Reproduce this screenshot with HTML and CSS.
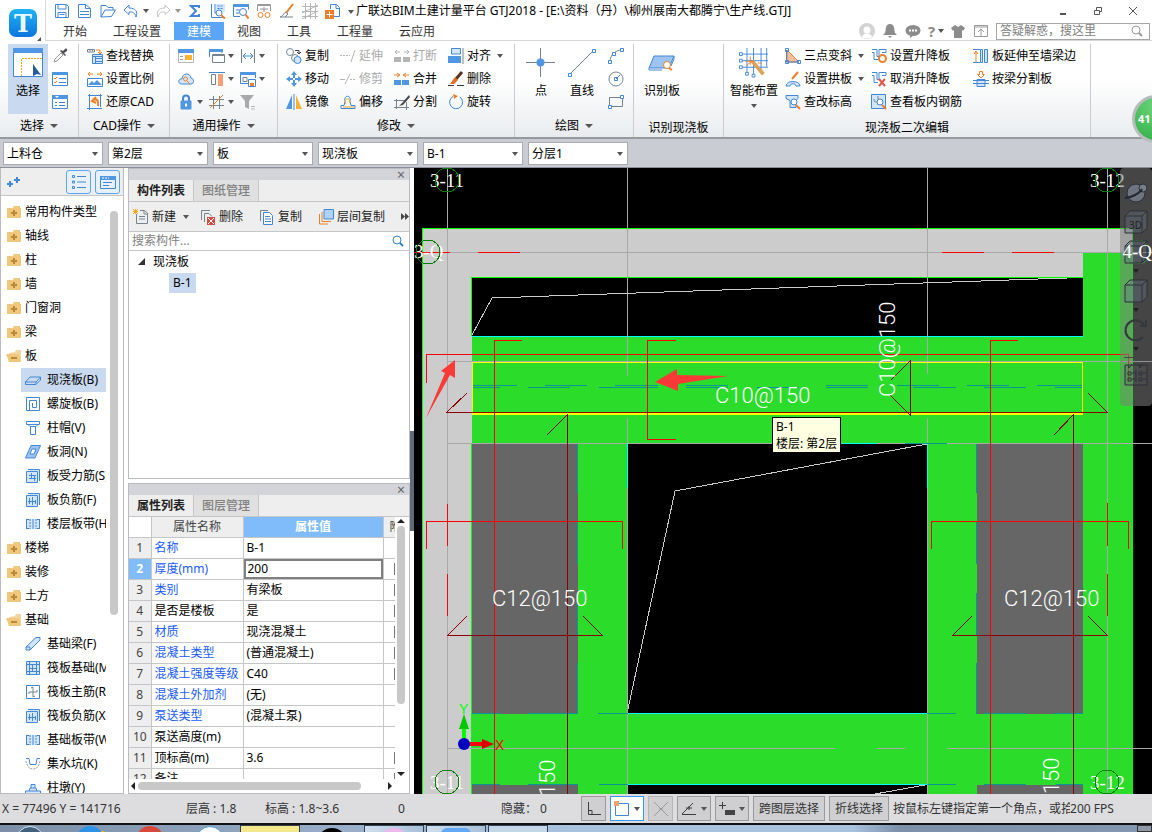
FILE: index.html
```html
<!DOCTYPE html>
<html lang="zh-CN">

<head>
    <meta charset="UTF-8">
    <meta name="viewport" content="width=device-width, initial-scale=1.0">
    <title>广联达BIM土建计量平台 GTJ2018</title>
    <link rel="stylesheet" href="styles.css">
</head>

<body>
    <!-- icon set -->
    <svg class="sprite" aria-hidden="true">
        <symbol id="save" viewBox="0 0 16 16"><path d="M1.500 1.500h11l2 2v11h-13zM4 1.500v4.500h8v-4.500M4 14.500v-5h8v5M5.500 11.500h5" class="b" /></symbol>
        <symbol id="doc" viewBox="0 0 16 16"><path d="M1.500 14.500v-13h7l5 4v9zM8.500 1.500v4h5M3 8.500h9M3 11.500h9" class="b" /></symbol>
        <symbol id="open" viewBox="0 0 16 16"><path d="M1 14V2.500h5l2 2h5V7M1 14l4-7h10.500l-4 6.500z" class="b" /></symbol>
        <symbol id="undo" viewBox="0 0 16 16"><path d="M6 2 1 7l5 4.500V9c4-.5 6 1 7 5 2-5 0-9-7-9z" class="b" /></symbol>
        <symbol id="redo" viewBox="0 0 16 16"><path d="m10 2 5 5-5 4.500V9c-4-.5-6 1-7 5C1 9 3 5 10 5z" class="g" /></symbol>
        <symbol id="sum" viewBox="0 0 16 16"><path d="M12 5V3H4l5 5-5 5h8v-2" class="b w2" /></symbol>
        <symbol id="calc" viewBox="0 0 16 16"><path d="M1.500 1v13.500H15M5 1v9h4" class="b" /><path d="M6 1h9v8H6z" class="lb" /><path d="M7.500 3h6M7.500 5.500h6" class="b dash" /><circle cx="9" cy="10" r="3" class="b fw" /><path d="m11 12 4 3.500" class="o w2" /></symbol>
        <symbol id="find" viewBox="0 0 16 16"><path d="M.5 13.500V1.500h15v5M.5 13.500H7M3 7h5M3 10h3" class="b" /><path d="M0 1h16v3H0z" class="fb" /><circle cx="10" cy="9" r="3.500" class="b fw" /><path d="m12.500 11.500 3 4" class="o w2" /></symbol>
        <symbol id="glasses" viewBox="0 0 16 16"><path d="M1.500 8V1.500h13V8M1 2.500h14M4 6h8M8 4v5" class="g" /><circle cx="4.500" cy="12" r="2.500" class="o" /><circle cx="11.500" cy="12" r="2.500" class="o" /></symbol>
        <symbol id="brush" viewBox="0 0 16 16"><path d="m14 1-7 9" class="o w2" /><path d="M7 9c-2 0-2 4-6 5h13M7 9l2 2-3 3" class="k" /></symbol>
        <symbol id="mesh" viewBox="0 0 16 16"><path d="M3.500 0v16M8.500 0v16M13.500 0v16M0 3.500h16M0 8.500h16M0 13.500h16M0 10 16 2M0 16 16 8" class="lg" /></symbol>
        <symbol id="import" viewBox="0 0 16 16"><path d="M5.500 6V1.500h6l3 3v9H9M11 1.500v4h3.500" class="b" /><path d="M0 7h9v9H0z" class="fo" /><path d="M4.500 8.500v6M1.500 11.500h6" class="w" /></symbol>

        <symbol id="select-big" viewBox="0 0 30 30"><path d="M.5.5h29v28H.5z" class="b fw" /><path d="M0 0h30v5H0z" class="fb" /><path d="M8.500 28V10.500H30" class="y dash" /><path d="m20 16 8 11-4-1-4 2z" fill="#285a9c" /></symbol>
        <symbol id="dropper" viewBox="0 0 16 16"><path d="m2 14 1-3 6-6 2 2-6 6z" class="g" /><path d="m8 3 5 5 1-1-2-2 3-2c1-2-1-3-2-2l-2 2-2-1z" fill="#4c5054" /></symbol>
        <symbol id="checklist" viewBox="0 0 16 16"><path d="M.5 1.500h15v13H.5z" class="b fw" /><path d="M0 1h16v3H0z" class="fb" /><path d="m2 7 1 1 2-2M2 11l1 1 2-2" class="o" /><path d="M7 7.500h7M7 11.500h7" class="b" /></symbol>
        <symbol id="form" viewBox="0 0 16 16"><path d="M.5 1.500h15v13H.5z" class="b fw" /><path d="M0 1h16v4H0z" class="fb" /><path d="m3 2 2 2 2-2z" fill="#fff" /><path d="M3 8.500h2M7 8.500h6M3 11.500h2M7 11.500h6" class="b" /></symbol>
        <symbol id="replace" viewBox="0 0 16 16"><path d="M.5 1.500h7v2.500h-7zM3 1.500v2M5.500 1.500v2" class="k" /><path d="M9 2h4v4M11 4l2 2 2-2" class="o" /><path d="M5.500 6.500h10v9h-10zM5 8.500h10M8.500 8v8M8 10.500h7M8 13.500h7" class="b lbf" /></symbol>
        <symbol id="scale" viewBox="0 0 16 16"><path d="M1 3h5M3 1 1 3l2 2M15 3h-5M13 1l2 2-2 2" class="o" /><path d="M.5 7.500h15v8H.5z" class="b fw" /><path d="m1 14 4-4 2 2 3-3 5 5z" class="fb" /></symbol>
        <symbol id="restore" viewBox="0 0 16 16"><path d="M1 1.500h14M2.500 0v16M0 14.500h15M13.500 0v13" class="b" /><path d="M11 12c1-5-1-8-4-6M9 3 5 7l4 2" class="o w2" /></symbol>
        <symbol id="props" viewBox="0 0 16 16"><path d="M.5 1.500h15v13H.5z" class="lg fw" /><path d="M0 1h16v4H0z" class="fb" /><path d="M2 8.500h3M2 11.500h3" class="g" /><path d="M7 7h7v5H7z" class="fy" /></symbol>
        <symbol id="layers" viewBox="0 0 16 16"><path d="M.5 9V1.500H13V5" class="b" /><path d="M0 1h14v3H0z" class="fb" /><path d="M3.500 6.500h12v8h-12z" class="k fw" /><path d="M3 7.500h13" class="k" /></symbol>
        <symbol id="measure" viewBox="0 0 16 16"><path d="M1.500 1v14M14.500 1v14" class="k" /><path d="M3 8h10M6 5 3 8l3 3M10 5l3 3-3 3" class="b" /></symbol>
        <symbol id="cloud" viewBox="0 0 16 16"><path d="M3 13c-4-1-2-6 1-5 0-6 8-7 9-1 4 1 3 6 0 6z" class="b lbf" /><circle cx="7.500" cy="8" r="2" class="o" /><path d="m9 10 3 3" class="o" /></symbol>
        <symbol id="columns" viewBox="0 0 16 16"><path d="M0 1.500h16" class="b" /><path d="M2.500 3.500h4v10h-4z" class="k" /><path d="M9 3h5v12H9z" fill="#f7a078" /></symbol>
        <symbol id="savewin" viewBox="0 0 16 16"><path d="M15.500 7V1.500H.5v11H8" class="b" /><path d="M0 1h16v3H0z" class="fb" /><path d="M3 6.500h4v4H3z" class="k" /><path d="M8.500 8.500h7v7h-7z" class="b fw" /><path d="M10 12h4v3h-4z" class="fo" /></symbol>
        <symbol id="lock" viewBox="0 0 16 16"><path d="M5 7V4.500c0-4 6-4 6 0V7" class="b w2" /><rect x="2.500" y="6.500" width="11" height="9" rx="1" class="fb" /><path d="M8 9.500v3" class="w w2" /></symbol>
        <symbol id="axis" viewBox="0 0 16 16"><path d="M4.500 2v13M10.500 2v13M0 5.500h15M0 11.500h15" class="k" /><path d="m1 14 13-13" class="o" /></symbol>
        <symbol id="filter" viewBox="0 0 16 16"><path d="M0 1h14L9 7v8l-4-2V7z" fill="#a9a9a9" /><path d="M11 12.500h4M11 15h4" class="lg" /></symbol>

        <symbol id="copy" viewBox="0 0 16 16"><circle cx="4" cy="4" r="3.500" class="k" /><path d="M9 2.500h4V5M11 4l2 2 2-2" class="dk" /><circle cx="9" cy="10" r="3.500" class="k" /><circle cx="11.500" cy="12" r="3.500" class="b lbf" /></symbol>
        <symbol id="move" viewBox="0 0 16 16"><path d="m8 0 3 4H9v3H7V4H5zM8 16l-3-4h2V9h2v3h2zM0 8l4-3v2h3v2H4v2zM16 8l-4 3V9H9V7h3V5z" class="fb" /></symbol>
        <symbol id="mirror" viewBox="0 0 16 16"><path d="M6 1v14H0z" class="fb" /><path d="M10 1v14h6z" class="fy" /><path d="M8 0v16" class="b" /></symbol>
        <symbol id="extend" viewBox="0 0 16 16"><path d="M0 7.500h10" class="lg dash" /><path d="m11 14 4-12" class="lg" /></symbol>
        <symbol id="trim" viewBox="0 0 16 16"><path d="M0 8.500h5M5 13l5-10" class="lg" /><path d="M10 8.500h6" class="lg dash" /></symbol>
        <symbol id="offset" viewBox="0 0 16 16"><path d="M1 14.500h14v-3h-4l-1-4c2-7-7-7-5 0l-1 4H1z" class="b" /><path d="M3 13h11M6 10c-3-5 4-8 4-1" class="y" /></symbol>
        <symbol id="break" viewBox="0 0 16 16"><path d="M0 9h7v5H0zM9 9h7v5H9z" fill="#b5b5b5" /><path d="M1 4h5M3 2 1 4l2 2M15 4h-5M13 2l2 2-2 2" class="lg" /></symbol>
        <symbol id="merge" viewBox="0 0 16 16"><path d="M0 9h7v5H0zM8 9h7v5H8z" class="fb" /><path d="M0 4h5M3 2l3 2-3 2M15 4h-5M12 2 9 4l3 2" class="o" /></symbol>
        <symbol id="split" viewBox="0 0 16 16"><path d="M0 6.500h13M2.500 5v10M12.500 8v8M0 13.500h15" class="k" /><path d="m15 1-7 8-3 3 4-1 7-8z" fill="#4b4b4b" /></symbol>
        <symbol id="align" viewBox="0 0 16 16"><path d="M3.500.5h9V6h-9z" class="b lbf" /><path d="M0 8h13v7H0z" class="fb" /><path d="M15 0v16" class="k" /></symbol>
        <symbol id="erase" viewBox="0 0 16 16"><path d="m14 1-6 7" stroke="#54371f" stroke-width="3" /><path d="m7 6 3 3-4 4H2z" fill="#e36a22" /><path d="M0 14.500h6M9 14.500h7" class="dk" /></symbol>
        <symbol id="rotate" viewBox="0 0 16 16"><path d="M5 2.500a6.500 6.500 0 1 0 7 .5" class="b" /><path d="m5 0 5 2-4 3z" class="fo" /></symbol>

        <symbol id="point-big" viewBox="0 0 30 30"><path d="M14.500 0v29M0 14.500h29" class="k" /><circle cx="14.500" cy="14.500" r="4" class="fb" /></symbol>
        <symbol id="line-big" viewBox="0 0 30 30"><path d="M3 26 26 3" class="k" /><path d="M1.500 25.500h3v3h-3zM25.500 1.500h3v3h-3z" class="b fw" /></symbol>
        <symbol id="arc" viewBox="0 0 16 16"><path d="M2 14c0-7 5-12 12-12" class="k" /><path d="M.5 12.500h3v3h-3zM4.500 4.500h3v3h-3zM12.500.5h3v3h-3z" class="b fw" /></symbol>
        <symbol id="circle" viewBox="0 0 16 16"><circle cx="8" cy="8" r="7" class="k" /><path d="m8 8 4-4M6.500 6.500h3v3h-3z" class="b" /></symbol>
        <symbol id="rect" viewBox="0 0 16 16"><path d="M1.500 3.500h13v9h-13z" class="k" /><path d="M.5 11.500h3v3h-3zM12.500 1.500h3v3h-3z" class="b fw" /></symbol>
        <symbol id="slab-big" viewBox="0 0 30 30"><path d="M7 8h20l-5 12H2z" class="b" /><path d="M2 20v2h13M27 8v3l-3 7" class="b" /><circle cx="20" cy="17" r="3.500" class="o fw" /><path d="m22 20 3 2" class="o w2" /></symbol>
        <symbol id="smart-big" viewBox="0 0 32 32"><path d="M8.500 0v27M15.500 0v31M23.500 0v27M29.500 0v20M1 6.500h30M1 13.500h30M1 20.500h30" class="b" /><path d="M.5 5h3v3h-3zM.5 12h3v3h-3zM.5 19h3v3h-3zM7 26h3v3H7zM14 28h3v3h-3z" class="b fw" /><path d="m14 14 12 14" stroke="#dba35e" stroke-width="4" /><path d="M12 9v9M7 14h9M8 19l5-5M20 16h4" class="o" /></symbol>
        <symbol id="slope" viewBox="0 0 16 16"><path d="M2 2v12h12z" class="o" /><path d="M1.500 2v12H14M.5.5h3v3h-3zM.5 12.500h3v3h-3zM12.500 12.500h3v3h-3z" class="b" /></symbol>
        <symbol id="arch" viewBox="0 0 16 16"><path d="m13 1-6 7" class="o w2" /><path d="M1 15c0-6 14-6 14 0h-4c0-3-6-3-6 0z" class="b lbf" /></symbol>
        <symbol id="elev" viewBox="0 0 16 16"><path d="M1 1.500h12v3l-2 2v7H5v-7l-4-2z" class="b lbf" /><circle cx="9" cy="8" r="3" class="b fw" /><path d="m11 11 4 4" class="o w2" /></symbol>
        <symbol id="lift" viewBox="0 0 16 16"><path d="M1 1.500h5v7h3M1 4.500h2v7h4M8 8V1.500h7v3h-4" class="b" /><circle cx="11.500" cy="10.500" r="3.500" class="o w2 fw" /></symbol>
        <symbol id="unlift" viewBox="0 0 16 16"><path d="M1 1.500h5v7h3M1 4.500h2v7h4M8 8V1.500h7v3h-4" class="b" /><path d="m8 8 6 7M14 8l-6 7" stroke="#e0584c" stroke-width="2" /></symbol>
        <symbol id="rebar" viewBox="0 0 16 16"><path d="M.5.5h14v14H.5z" class="b lbf" /><path d="M7 2v9M3 5c0 5 3 2 5 3" class="k" /><circle cx="9" cy="8" r="3" class="b fw" /><path d="m11 11 4 4" class="o w2" /></symbol>
        <symbol id="stretch" viewBox="0 0 16 16"><path d="M0 1.500h7M0 14.500h7M7.500 1.500h2v13h-2zM11.500 1.500h3v13h-3z" class="b lbf" /><path d="M3 3v11M1 6l2-3 2 3" class="o" /></symbol>
        <symbol id="cut" viewBox="0 0 16 16"><path d="M6.500.5h3v3h2L8 7 4.500 3.500h2z" class="o" /><path d="M0 9.500h16M0 12.500h16M4 8.500h8v7H4z" class="b lbf" /></symbol>

        <symbol id="bell" viewBox="0 0 16 16"><path d="M8 1c5 0 4 6 5 9l2 2H1l2-2c1-3 0-9 5-9zM6 13h4l-2 2z" class="fg" /></symbol>
        <symbol id="chat" viewBox="0 0 16 16"><ellipse cx="8" cy="7.500" rx="7.500" ry="5.500" class="fg" /><path d="M5 12v3l4-3z" class="fg" /><path d="M4 7.500h8" stroke="#fff" stroke-width="2" stroke-dasharray="2 1" /></symbol>
        <symbol id="shirt" viewBox="0 0 16 16"><path d="m5 2 3 2 3-2 4 3-2 3-1-1v8H4V7L3 8 1 5z" class="fg" /></symbol>
        <symbol id="upwin" viewBox="0 0 16 16"><path d="M1.500 2.500h13v11h-13zM1.500 4h13M8 13V7M5 9l3-3 3 3" class="g" /></symbol>
        <symbol id="avatar" viewBox="0 0 16 16"><circle cx="8" cy="8" r="8" fill="#d3d3d3" /><circle cx="8" cy="7" r="3.500" fill="#fff" /><path d="M3 14c2-5 8-5 10 0-2 2-8 2-10 0z" fill="#fff" /></symbol>
        <symbol id="search" viewBox="0 0 16 16"><circle cx="7" cy="7" r="4" fill="none" stroke="currentColor" /><path d="m10 10 3 3" stroke="currentColor" stroke-width="2" /></symbol>

        <symbol id="plus2" viewBox="0 0 16 16"><path d="M1 10h6M4 7v6M8 6h6M11 3v6" class="b w2" /></symbol>
        <symbol id="list" viewBox="0 0 16 16"><path d="M1.500 1.500h2v2h-2zM1.500 7h2v2h-2zM1.500 12.500h2v2h-2zM6 2.500h9M6 8h9M6 13.500h9" class="b" /></symbol>
        <symbol id="panel" viewBox="0 0 16 16"><path d="M.5 2.500h15v12H.5zM3 8.500h9M3 11.500h6" class="b" /><path d="M0 2h16v4H0z" class="fb" /><path d="M2 4h7" class="w dash" /></symbol>
        <symbol id="folder" viewBox="0 0 16 16"><path d="M1 4h6l1-2h6v2h1v10H1z" fill="#efc87e" /><path d="M8 6v6M5 9h6" stroke="#b98a35" stroke-width="2" /></symbol>
        <symbol id="folder-open" viewBox="0 0 16 16"><path d="M3 5 9 4l1-2h5v12H3z" fill="#f2d79f" /><path d="M0 6h13l2 8H3z" fill="#efc87e" /><path d="M5 10h6" stroke="#b98a35" stroke-width="2" /></symbol>
        <symbol id="slab" viewBox="0 0 16 16"><path d="M5 5h10.500L11 10H.5zM.5 10v2.500H11L15.500 8V5M11 10v2" class="b" /></symbol>
        <symbol id="spiral" viewBox="0 0 16 16"><path d="M2 14.500h12.500v-13h-13v13h3V4.500h7v7h-4V7" class="b" /></symbol>
        <symbol id="cap" viewBox="0 0 16 16"><path d="M1.500 1.500h13v3h-13zM3 4.500l2 2h6l2-2M5.500 6.500v8h5v-8" class="b" /></symbol>
        <symbol id="hole" viewBox="0 0 16 16"><path d="M6 1.500h9.500L10 14H.5z" class="b" /><path d="M7 5h4l-2 5H5z" class="b fw" /></symbol>
        <symbol id="bars" viewBox="0 0 16 16"><path d="M1.500 3.500h11v11h-11zM3 1.500h11.500V13M4 7.500h7M4 10.500h7M6.500 5v5M9.500 8v5" class="b lbf" /></symbol>
        <symbol id="neg" viewBox="0 0 16 16"><path d="M1.500 3.500h11v11h-11zM3 1.500h11.500V13M4.500 6v6M3 9.500h8M7.500 5v8M10.500 8v4" class="b lbf" /></symbol>
        <symbol id="strip" viewBox="0 0 16 16"><path d="M1 3h14v10H1z" class="lb" /><path d="M1.500 3v10M8 3v10M14.500 3v10M1 3.500h3M12 3.500h3M1 12.500h3M12 12.500h3" class="b" /><path d="M5 3v10M11 3v10" class="b dash" /></symbol>
        <symbol id="beam" viewBox="0 0 16 16"><path d="M1 11 11 1.500h4V4L5 14H1zM1 11h4v3" class="b lbf" /></symbol>
        <symbol id="raft" viewBox="0 0 16 16"><path d="M1.500 1.500h13v13h-13zM4.500 2v12M11.500 2v12M1 4.500h13M1 11.500h13M7.500 5v6M4 8.500h7" class="b lbf" /></symbol>
        <symbol id="raftbar" viewBox="0 0 16 16"><path d="M1.500 1.500h13v13h-13z" class="b" /><path d="M8 3v10M4 8h8M6 4l2-1M10 12l-2 1M4 8v2M12 8V6" class="k" /></symbol>
        <symbol id="pit" viewBox="0 0 16 16"><path d="M1 2.500h3l1 6h6l1-6h3" class="b" /><path d="M1 5c1 5 3 8 7 8s6-3 7-8" class="g dash" /></symbol>
        <symbol id="pier" viewBox="0 0 16 16"><path d="M6 8V4.500h4V8M4 11l1-3h6l1 3M.5 11h15v3.500H.5z" class="b lbf" /></symbol>

        <symbol id="new" viewBox="0 0 16 16"><path d="M3.500 5v9.500h11V4l-3-2.500H7M11 2v3h3M6 7.500h6M6 10h6" class="k" /><path d="m0 0 5 5M5 0 0 5M2.500 0v5M0 2.500h5" class="y" /></symbol>
        <symbol id="del" viewBox="0 0 16 16"><path d="M1.500 11V1.500H10M4.500 13V4.500H9l3 3" class="k" /><path d="M7 8h8v8H7z" fill="#d84b4b" /><path d="m8 9 6 6M14 9l-6 6" class="w" /></symbol>
        <symbol id="dup" viewBox="0 0 16 16"><path d="M1.500 12V1.500H9" class="k" /><path d="M4.500 3.500h6l3 3v9h-9zM6 7.500h5M6 10h6M6 12.500h6" class="b fw" /></symbol>
        <symbol id="floors" viewBox="0 0 16 16"><path d="M1.500 5v10H10M4 3v9.500h9" class="o" /><path d="M6 .5h9.500V10H6z" class="b" /></symbol>

        <symbol id="ortho" viewBox="0 0 16 16"><path d="M2.500 1v12.500H15M2 9.500h4v4" class="dk" /></symbol>
        <symbol id="snaprect" viewBox="0 0 16 16"><path d="M1.500 2.500h13v12h-13z" class="b" /><path d="M0 0h5v5H0z" fill="#f0a26a" /></symbol>
        <symbol id="cross" viewBox="0 0 16 16"><path d="m1 1 14 14M15 1 1 15M6 8h4" class="g" /></symbol>
        <symbol id="angle" viewBox="0 0 16 16"><path d="M1 13.500h14M1 13 12 2M5 7h6M8 5v4" class="dk" /></symbol>
        <symbol id="plusbox" viewBox="0 0 16 16"><path d="M0 4.500h7M3.500 1v7" class="dk" /><path d="M6 9h10v5H6z" fill="#444" /></symbol>

        <symbol id="v-orbit" viewBox="0 0 24 24"><circle cx="12" cy="13" r="9" fill="#6d7480" stroke="#2b3038" /><circle cx="19" cy="8" r="4" fill="#777e89" stroke="#2b3038" /><path d="M1 18c6 0 15-5 17-9" fill="none" stroke="#23272d" stroke-width="2" /></symbol>
        <symbol id="v-cube" viewBox="0 0 24 24"><path d="M1 6 6 1h17v17l-5 5H1zM1 6h17v17M18 6l5-5" fill="rgba(105,120,140,.35)" stroke="#2c3036" /></symbol>
        <symbol id="v-rot" viewBox="0 0 24 24"><path d="M19 19a10 10 0 1 1 1-12M22 2v6h-6" fill="none" stroke="#33383d" stroke-width="2" /></symbol>
        <symbol id="v-opt" viewBox="0 0 24 24"><path d="M1 3h22v20H1zM12 8v12M4 3l1 3 3-4M15 3l1 3 3-4" fill="rgba(90,90,100,.3)" stroke="#2c3036" /><path d="M4 10h3v3H4zM4 16h3v3H4zM15 10h3v3h-3zM15 16h3v3h-3zM8 11h3M8 17h3M19 11h3M19 17h3" fill="none" stroke="#2c3036" /></symbol>
    </svg>

    <div class="app">
        <header class="header">
            <button class="logo" aria-label="主菜单">
                <svg width="28" height="28" viewBox="0 0 28 28">
                    <defs>
                        <linearGradient id="logoFill" x1="0" y1="0" x2="0" y2="1">
                            <stop offset="0" stop-color="#1fb4f5" />
                            <stop offset="1" stop-color="#0d74dd" />
                        </linearGradient>
                    </defs>
                    <rect width="28" height="28" rx="7" fill="url(#logoFill)" />
                    <text x="14" y="23" text-anchor="middle" class="logo-letter">T</text>
                </svg>
                <i class="corner"></i>
            </button>
            <div class="header-main">
                <div class="titlebar">
                    <div class="quick">
                        <button aria-label="保存"><svg class="icon"><use href="#save" /></svg></button>
                        <button aria-label="另存为"><svg class="icon"><use href="#doc" /></svg></button>
                        <button aria-label="打开"><svg class="icon"><use href="#open" /></svg></button>
                        <button class="with-caret" aria-label="撤销"><svg class="icon"><use href="#undo" /></svg><i class="caret"></i></button>
                        <button class="with-caret dim" aria-label="恢复"><svg class="icon"><use href="#redo" /></svg><i class="caret"></i></button>
                        <button aria-label="汇总计算"><svg class="icon"><use href="#sum" /></svg></button>
                        <button aria-label="查看计算式"><svg class="icon"><use href="#calc" /></svg></button>
                        <button aria-label="查看工程量"><svg class="icon"><use href="#find" /></svg></button>
                        <button aria-label="查看钢筋量"><svg class="icon"><use href="#glasses" /></svg></button>
                        <button aria-label="编辑钢筋"><svg class="icon"><use href="#brush" /></svg></button>
                        <button aria-label="钢筋三维"><svg class="icon"><use href="#mesh" /></svg></button>
                        <button aria-label="导入"><svg class="icon"><use href="#import" /></svg></button>
                    </div>
                    <i class="caret lined"></i>
                    <h1 class="title">广联达BIM土建计量平台 GTJ2018 - [E:\资料（丹）\柳州展南大都腾宁\生产线.GTJ]</h1>
                    <div class="window-buttons">
                        <button aria-label="最小化"><svg width="10" height="10"><path d="M2 8h6" class="wb w2" /></svg></button>
                        <button aria-label="还原"><svg width="10" height="10"><path d="M1.500 4.500h5v4h-5zM3.500 4V1.500h5v4H7" class="wb" /></svg></button>
                        <button aria-label="关闭"><svg width="10" height="10"><path d="m1 1 8 8M9 1 1 9" class="wb" /></svg></button>
                    </div>
                </div>
                <nav class="tabs">
                    <a href="#start">开始</a>
                    <a href="#settings">工程设置</a>
                    <a href="#model" class="active">建模</a>
                    <a href="#view">视图</a>
                    <a href="#tools">工具</a>
                    <a href="#quantity">工程量</a>
                    <a href="#cloudapp">云应用</a>
                    <div class="user-tools">
                        <button aria-label="用户"><svg class="icon"><use href="#avatar" /></svg></button>
                        <button aria-label="消息"><svg class="icon"><use href="#bell" /></svg></button>
                        <button aria-label="反馈"><svg class="icon"><use href="#chat" /></svg></button>
                        <button class="help" aria-label="帮助">?<i class="caret"></i></button>
                        <button aria-label="皮肤"><svg class="icon"><use href="#shirt" /></svg></button>
                        <button aria-label="收起"><svg class="icon"><use href="#upwin" /></svg></button>
                        <label class="ask"><input type="text" placeholder="答疑解惑，搜这里" aria-label="答疑解惑"><svg class="icon"><use href="#search" /></svg></label>
                    </div>
                </nav>
            </div>
        </header>

        <section class="ribbon">
            <div class="group">
                <div class="tools pick">
                    <button class="big active"><svg width="30" height="30"><use href="#select-big" /></svg>选择</button>
                    <div class="col">
                        <button aria-label="拾取"><svg class="icon"><use href="#dropper" /></svg></button>
                        <button aria-label="批量选择"><svg class="icon"><use href="#checklist" /></svg></button>
                        <button aria-label="按属性选择"><svg class="icon"><use href="#form" /></svg></button>
                    </div>
                </div>
                <div class="group-name">选择<i class="caret"></i></div>
            </div>
            <div class="group">
                <div class="tools">
                    <div class="col">
                        <button><svg class="icon"><use href="#replace" /></svg>查找替换</button>
                        <button><svg class="icon"><use href="#scale" /></svg>设置比例</button>
                        <button><svg class="icon"><use href="#restore" /></svg>还原CAD</button>
                    </div>
                </div>
                <div class="group-name">CAD操作<i class="caret"></i></div>
            </div>
            <div class="group">
                <div class="tools common">
                    <div class="col">
                        <button aria-label="属性"><svg class="icon"><use href="#props" /></svg></button>
                        <button aria-label="云"><svg class="icon"><use href="#cloud" /></svg></button>
                        <button aria-label="锁定"><svg class="icon"><use href="#lock" /></svg><i class="caret"></i></button>
                    </div>
                    <div class="col">
                        <button aria-label="图层"><svg class="icon"><use href="#layers" /></svg><i class="caret"></i></button>
                        <button aria-label="构件"><svg class="icon"><use href="#columns" /></svg><i class="caret"></i></button>
                        <button aria-label="辅轴"><svg class="icon"><use href="#axis" /></svg><i class="caret"></i></button>
                    </div>
                    <div class="col">
                        <button aria-label="测量"><svg class="icon"><use href="#measure" /></svg><i class="caret"></i></button>
                        <button aria-label="存盘"><svg class="icon"><use href="#savewin" /></svg><i class="caret"></i></button>
                        <button aria-label="过滤"><svg class="icon"><use href="#filter" /></svg></button>
                    </div>
                </div>
                <div class="group-name">通用操作<i class="caret"></i></div>
            </div>
            <div class="group">
                <div class="tools modify">
                    <div class="col">
                        <button><svg class="icon"><use href="#copy" /></svg>复制</button>
                        <button><svg class="icon"><use href="#move" /></svg>移动</button>
                        <button><svg class="icon"><use href="#mirror" /></svg>镜像</button>
                    </div>
                    <div class="col">
                        <button disabled><svg class="icon"><use href="#extend" /></svg>延伸</button>
                        <button disabled><svg class="icon"><use href="#trim" /></svg>修剪</button>
                        <button><svg class="icon"><use href="#offset" /></svg>偏移</button>
                    </div>
                    <div class="col">
                        <button disabled><svg class="icon"><use href="#break" /></svg>打断</button>
                        <button><svg class="icon"><use href="#merge" /></svg>合并</button>
                        <button><svg class="icon"><use href="#split" /></svg>分割</button>
                    </div>
                    <div class="col">
                        <button><svg class="icon"><use href="#align" /></svg>对齐<i class="caret"></i></button>
                        <button><svg class="icon"><use href="#erase" /></svg>删除</button>
                        <button><svg class="icon"><use href="#rotate" /></svg>旋转</button>
                    </div>
                </div>
                <div class="group-name">修改<i class="caret"></i></div>
            </div>
            <div class="group">
                <div class="tools draw">
                    <button class="big"><svg width="30" height="30"><use href="#point-big" /></svg>点</button>
                    <button class="big"><svg width="30" height="30"><use href="#line-big" /></svg>直线</button>
                    <div class="col">
                        <button aria-label="弧"><svg class="icon"><use href="#arc" /></svg></button>
                        <button aria-label="圆"><svg class="icon"><use href="#circle" /></svg></button>
                        <button aria-label="矩形"><svg class="icon"><use href="#rect" /></svg></button>
                    </div>
                </div>
                <div class="group-name">绘图<i class="caret"></i></div>
            </div>
            <div class="group">
                <div class="tools identify">
                    <button class="big"><svg width="30" height="30"><use href="#slab-big" /></svg>识别板</button>
                </div>
                <div class="group-name fixed">识别现浇板</div>
            </div>
            <div class="group">
                <div class="tools edit">
                    <button class="big"><svg width="30" height="30"><use href="#smart-big" /></svg>智能布置<i class="caret"></i></button>
                    <div class="col">
                        <button><svg class="icon"><use href="#slope" /></svg>三点变斜<i class="caret"></i></button>
                        <button><svg class="icon"><use href="#arch" /></svg>设置拱板<i class="caret"></i></button>
                        <button><svg class="icon"><use href="#elev" /></svg>查改标高</button>
                    </div>
                    <div class="col">
                        <button><svg class="icon"><use href="#lift" /></svg>设置升降板</button>
                        <button><svg class="icon"><use href="#unlift" /></svg>取消升降板</button>
                        <button><svg class="icon"><use href="#rebar" /></svg>查看板内钢筋</button>
                    </div>
                    <div class="col">
                        <button><svg class="icon"><use href="#stretch" /></svg>板延伸至墙梁边</button>
                        <button><svg class="icon"><use href="#cut" /></svg>按梁分割板</button>
                    </div>
                </div>
                <div class="group-name fixed">现浇板二次编辑</div>
            </div>
            <div class="score">41</div>
        </section>

        <section class="context-bar">
            <select aria-label="工程"><option>上料仓</option></select>
            <select aria-label="楼层"><option>第2层</option></select>
            <select aria-label="构件类别"><option>板</option></select>
            <select aria-label="构件类型"><option>现浇板</option></select>
            <select aria-label="构件"><option>B-1</option></select>
            <select aria-label="分层"><option>分层1</option></select>
        </section>

        <main class="workspace">
            <aside class="nav">
                <div class="nav-head">
                    <button aria-label="展开"><svg class="icon"><use href="#plus2" /></svg></button>
                    <button class="boxed" aria-label="列表"><svg class="icon"><use href="#list" /></svg></button>
                    <button class="boxed" aria-label="面板"><svg class="icon"><use href="#panel" /></svg></button>
                </div>
                <div class="nav-body">
                    <ul class="nav-list">
                        <li><svg class="icon"><use href="#folder" /></svg>常用构件类型</li>
                        <li><svg class="icon"><use href="#folder" /></svg>轴线</li>
                        <li><svg class="icon"><use href="#folder" /></svg>柱</li>
                        <li><svg class="icon"><use href="#folder" /></svg>墙</li>
                        <li><svg class="icon"><use href="#folder" /></svg>门窗洞</li>
                        <li><svg class="icon"><use href="#folder" /></svg>梁</li>
                        <li><svg class="icon"><use href="#folder-open" /></svg>板</li>
                        <li class="sub active"><svg class="icon"><use href="#slab" /></svg>现浇板(B)</li>
                        <li class="sub"><svg class="icon"><use href="#spiral" /></svg>螺旋板(B)</li>
                        <li class="sub"><svg class="icon"><use href="#cap" /></svg>柱帽(V)</li>
                        <li class="sub"><svg class="icon"><use href="#hole" /></svg>板洞(N)</li>
                        <li class="sub"><svg class="icon"><use href="#bars" /></svg>板受力筋(S)</li>
                        <li class="sub"><svg class="icon"><use href="#neg" /></svg>板负筋(F)</li>
                        <li class="sub"><svg class="icon"><use href="#strip" /></svg>楼层板带(H)</li>
                        <li><svg class="icon"><use href="#folder" /></svg>楼梯</li>
                        <li><svg class="icon"><use href="#folder" /></svg>装修</li>
                        <li><svg class="icon"><use href="#folder" /></svg>土方</li>
                        <li><svg class="icon"><use href="#folder-open" /></svg>基础</li>
                        <li class="sub"><svg class="icon"><use href="#beam" /></svg>基础梁(F)</li>
                        <li class="sub"><svg class="icon"><use href="#raft" /></svg>筏板基础(M)</li>
                        <li class="sub"><svg class="icon"><use href="#raftbar" /></svg>筏板主筋(R)</li>
                        <li class="sub"><svg class="icon"><use href="#neg" /></svg>筏板负筋(X)</li>
                        <li class="sub"><svg class="icon"><use href="#strip" /></svg>基础板带(W)</li>
                        <li class="sub"><svg class="icon"><use href="#pit" /></svg>集水坑(K)</li>
                        <li class="sub"><svg class="icon"><use href="#pier" /></svg>柱墩(Y)</li>
                    </ul>
                    <div class="scroll-v"></div>
                </div>
            </aside>

            <div class="panels">
                <section class="panel">
                    <div class="panel-strip"><button aria-label="关闭">×</button></div>
                    <div class="panel-tabs"><button class="active">构件列表</button><button>图纸管理</button></div>
                    <div class="panel-tools">
                        <button class="drop"><svg class="icon"><use href="#new" /></svg>新建<i class="caret"></i></button>
                        <button><svg class="icon"><use href="#del" /></svg>删除</button>
                        <button><svg class="icon"><use href="#dup" /></svg>复制</button>
                        <button><svg class="icon"><use href="#floors" /></svg>层间复制</button>
                        <button class="more" aria-label="更多"><svg width="8" height="7"><path d="M0 0v7l4-3.500zM4 0v7l4-3.500z" fill="#444" /></svg></button>
                    </div>
                    <label class="panel-search"><input type="text" placeholder="搜索构件..." aria-label="搜索构件"><svg class="icon"><use href="#search" /></svg></label>
                    <ul class="tree">
                        <li><svg width="7" height="7"><path d="M7 0v7H0z" fill="#333" /></svg>现浇板</li>
                        <li><span class="chosen">B-1</span></li>
                    </ul>
                </section>

                <section class="panel props">
                    <div class="panel-strip"><button aria-label="关闭">×</button></div>
                    <div class="panel-tabs"><button class="active">属性列表</button><button>图层管理</button></div>
                    <div class="props-body">
                        <div class="table-clip">
                            <table>
                                <thead>
                                    <tr><th class="num blank"></th><th class="name">属性名称</th><th class="value on">属性值</th><th class="extra">附加</th></tr>
                                </thead>
                                <tbody>
                                    <tr><th>1</th><td class="link">名称</td><td>B-1</td><td></td></tr>
                                    <tr><th class="on">2</th><td class="link">厚度(mm)</td><td class="editing"><input type="text" value="200" aria-label="厚度(mm)"></td><td><input type="checkbox" aria-label="附加厚度"></td></tr>
                                    <tr><th>3</th><td class="link">类别</td><td>有梁板</td><td><input type="checkbox" aria-label="附加类别"></td></tr>
                                    <tr><th>4</th><td>是否是楼板</td><td>是</td><td><input type="checkbox" aria-label="附加是否是楼板"></td></tr>
                                    <tr><th>5</th><td class="link">材质</td><td>现浇混凝土</td><td><input type="checkbox" aria-label="附加材质"></td></tr>
                                    <tr><th>6</th><td class="link">混凝土类型</td><td>(普通混凝土)</td><td><input type="checkbox" aria-label="附加混凝土类型"></td></tr>
                                    <tr><th>7</th><td class="link">混凝土强度等级</td><td>C40</td><td><input type="checkbox" aria-label="附加混凝土强度等级"></td></tr>
                                    <tr><th>8</th><td class="link">混凝土外加剂</td><td>(无)</td><td></td></tr>
                                    <tr><th>9</th><td class="link">泵送类型</td><td>(混凝土泵)</td><td></td></tr>
                                    <tr><th>10</th><td>泵送高度(m)</td><td></td><td></td></tr>
                                    <tr><th>11</th><td>顶标高(m)</td><td>3.6</td><td><input type="checkbox" aria-label="附加顶标高"></td></tr>
                                    <tr><th>12</th><td>备注</td><td></td><td><input type="checkbox" aria-label="附加备注"></td></tr>
                                </tbody>
                            </table>
                        </div>
                        <div class="track-v"><i class="up"></i><div class="scroll-v"></div><i class="down"></i></div>
                    </div>
                    <div class="track-h"><i class="left"></i><div class="scroll-h"></div><i class="right"></i></div>
                </section>
            </div>

            <div class="splitter"><button aria-label="折叠"></button></div>

            <section class="canvas">
                <svg class="drawing">
                    <g transform="translate(-414 -168)">
                        <!-- walls and slabs -->
                        <path d="M423 229h710v565H423z" fill="#ccc" />
                        <path d="M472 336h661v458H472zM1083 253h50v100h-50z" fill="#2bdc2b" />
                        <path d="M472 278h611v58H472zM628 444h299v270H628zM628 785h299v9H628z" />
                        <path d="M472 444h106v270H472zM977 444h106v270H977zM472 785h106v9H472zM977 785h106v9H977z" fill="#666" />
                        <path d="M422 794V228h710v566M471 336V277h612M471 444v350" class="lime" />

                        <!-- axis grid -->
                        <path d="M447 168v626M627 168v208M627 418v376M927 168v206M927 418v376M1107 168v626M414 252h738M447 361h705M447 443h705M447 748h388M877 748h28M947 748h205" class="axis" />
                        <path d="M472 335 492 298 1067 278M628 709 675 491 927 444M875 794 925 785" class="void" />

                        <!-- beam edges -->
                        <path d="M472 336h611M627 443v45M927 443v45M628 713h299M628 784h299M842 443h35" class="cyan" />
                        <path d="M472 385h45M545 385h42M615 385h43M686 385h42M826 385h42M897 385h42M967 385h42M1037 385h46M472 387h28M528 387h42M599 387h59M686 387h42M757 387h42M826 387h42M913 387h43M984 387h42M1055 387h28" class="teal" />
                        <path d="M577 444v49M577 521v43M577 593v42M577 663v51M976 444v49M976 521v43M976 593v42M976 663v51M472 713h28M528 713h50M598 713h30M927 713h29M984 713h42M1054 713h29M472 784h28M528 784h50M599 784h29M927 784h29M984 784h42M1056 784h27M905 443h42" class="teal" />
                        <path d="M472 362h610v51H472z" class="yellow" />
                        <path d="M472 414h611" class="yellow" />

                        <!-- rebars -->
                        <path d="M414 252h36M478 252h42M942 252h42M1012 252h42M447 504v42M447 574v42M1107 503v43M1107 574v42" class="red" />
                        <path d="M426 383V354h702v27M494 794V340h28M676 340h-29v99h29M990 794V340h28M426 549V521h196v28M931 549V521h197v28" class="red" />
                        <path d="M467 393 447 412h660l-19-19M547 435l20-20v379M891 380l19-19v54l-20-20M1054 435l19-20v379M467 616l-19 19h154l-19-19M972 616l-19 19h154l-19-19" class="maroon" />
                        <g class="rebar-text">
                            <text x="715" y="403">C10@150</text>
                            <text x="492" y="606">C12@150</text>
                            <text x="1004" y="606">C12@150</text>
                            <text transform="translate(895 397) rotate(-90)">C10@150</text>
                            <text transform="translate(555 855) rotate(-90)">C12@150</text>
                            <text transform="translate(1059 853) rotate(-90)">C12@150</text>
                        </g>

                        <!-- axis bubbles -->
                        <g class="axis-text">
                            <text x="430" y="187">3-11</text>
                            <text x="1090" y="187">3-12</text>
                            <text x="414" y="258">3-Q</text>
                            <text x="430" y="789">3-11</text>
                            <text x="1090" y="789">3-12</text>
                        </g>
                        <g class="bubble">
                            <circle cx="447" cy="180" r="12" />
                            <circle cx="1107" cy="180" r="12" />
                            <circle cx="428" cy="252" r="12" />
                            <circle cx="1138" cy="252" r="12" />
                            <circle cx="447" cy="782" r="12" />
                            <circle cx="1107" cy="782" r="12" />
                        </g>

                        <!-- pointers -->
                        <g class="pointer">
                            <path d="m455 360-14 11 4 2-19 45 24-43 5 3z" />
                            <path d="m655 382 22-13v6l51 1-50 8v7z" />
                        </g>

                        <!-- coordinate marker -->
                        <g class="ucs">
                            <path d="M464 744V728" stroke="#0f0" stroke-width="4" />
                            <path d="m464 714 5 15h-10z" fill="#00c800" />
                            <path d="M464 744h18" stroke="red" stroke-width="4" />
                            <path d="m494 744-12 5v-10z" fill="#e00000" />
                            <circle cx="464" cy="744" r="6" fill="#0000c0" />
                            <text x="459" y="714" fill="#0f0">Y</text>
                            <text x="495" y="750" fill="red">X</text>
                        </g>
                    </g>
                </svg>
                <div class="tooltip">B-1<br>楼层: 第2层</div>
                <div class="view-tools">
                    <button aria-label="动态观察"><svg width="24" height="24"><use href="#v-orbit" /></svg></button>
                    <button aria-label="三维" class="three-d"><svg width="24" height="24"><use href="#v-cube" /></svg><span>3D</span></button>
                    <button aria-label="俯视"><svg width="24" height="24"><use href="#v-cube" /></svg><i class="caret"></i></button>
                    <button aria-label="实体"><svg width="24" height="24"><use href="#v-cube" /></svg><i class="caret"></i></button>
                    <button aria-label="旋转"><svg width="24" height="24"><use href="#v-rot" /></svg><i class="caret"></i></button>
                    <button aria-label="显示设置" class="ruled"><svg width="24" height="24"><use href="#v-opt" /></svg></button>
                </div>
                <span class="axis-label">4-Q</span>
            </section>
        </main>

        <footer class="status">
            <div class="readouts">
                <span>X = 77496 Y = 141716</span>
                <span>层高 : 1.8</span>
                <span>标高 : 1.8~3.6</span>
                <span>0</span>
                <span>隐藏： 0</span>
            </div>
            <button aria-label="正交"><svg class="icon"><use href="#ortho" /></svg></button>
            <button class="active" aria-label="对象捕捉"><svg class="icon"><use href="#snaprect" /></svg><i class="caret"></i></button>
            <button class="off" aria-label="交点"><svg class="icon"><use href="#cross" /></svg></button>
            <button aria-label="角度"><svg class="icon"><use href="#angle" /></svg><i class="caret"></i></button>
            <button aria-label="偏移输入"><svg class="icon"><use href="#plusbox" /></svg><i class="caret"></i></button>
            <button class="wide">跨图层选择</button>
            <button class="wide">折线选择</button>
            <div class="messages">
                <span class="hint">按鼠标左键指定第一个角点，或拾</span>
                <span class="fps">200 FPS</span>
            </div>
        </footer>

        <div class="taskbar">
            <span class="orb"></span>
            <span class="orb blue"></span>
            <span class="orb red"></span>
            <span class="orb white"></span>
            <span class="task yellow"></span>
            <span class="task plain"><i class="penguin"></i></span>
            <span class="task"><i class="pink"></i></span>
            <span class="task"><i class="sky"></i></span>
            <span class="task light"></span>
            <span class="peek"></span>
        </div>
    </div>
</body>

</html>
```
FILE: styles.css
```css
* {
    box-sizing: border-box;
}

body {
    margin: 0;
    font-family: "Noto Sans", "Noto Sans CJK SC", sans-serif;
    font-size: 12px;
    line-height: 16px;
    color: #000;
}

button,
input,
select {
    font: inherit;
    color: inherit;
}

button {
    display: flex;
    align-items: center;
    gap: 3px;
    padding: 0;
    border: 0;
    background: none;
    white-space: nowrap;
    cursor: pointer;
}

ul {
    list-style: none;
    margin: 0;
    padding: 0;
}

/* icons */
.sprite {
    position: absolute;
    width: 0;
    height: 0;
}

.icon {
    width: 16px;
    height: 16px;
    flex: none;
}

.b { stroke: #4287d6; fill: none; }
.o { stroke: #ee7f28; fill: none; }
.g { stroke: #9a9a9a; fill: none; }
.lg { stroke: #b5b5b5; fill: none; }
.k { stroke: #75838f; fill: none; }
.dk { stroke: #3c3c3c; fill: none; }
.y { stroke: #f0a818; fill: none; }
.w { stroke: #fff; fill: none; }
.w2 { stroke-width: 2; }
.fw { fill: #fff; }
.fb { fill: #4f96e3; }
.fo { fill: #ee7f28; }
.fy { fill: #f9b233; }
.fg { fill: #8c8c8c; }
.lb, .lbf { fill: #d3e5fa; }
.dash { stroke-dasharray: 2 1; }
.wb { stroke: #555; fill: none; }
#slab-big .b:first-child, #hole .b:first-child { fill: #9dc3f0; }
#floors .b { fill: #aed2fb; }
#slope .o { fill: #f8bf9d; }

.caret {
    flex: none;
    width: 0;
    height: 0;
    border: 3px solid transparent;
    border-top: 4px solid #555;
    border-bottom: 0;
}

.group-name .caret {
    border-width: 4px;
    border-bottom: 0;
}

.app {
    display: flex;
    flex-direction: column;
    height: 100vh;
    overflow: hidden;
}

/* header */
.header {
    display: flex;
    flex: none;
    background: #fff;
}

.logo {
    gap: 0;
    width: 46px;
    padding-left: 9px;
    padding-top: 4px;
    border-right: 1px solid #d8d8d8;
}

.corner {
    align-self: flex-end;
    border: 2px solid transparent;
    border-right-color: #555;
    border-bottom-color: #555;
}

.logo-letter {
    font: bold 24px "DejaVu Serif", serif;
    fill: #e8f8ff;
}

.header-main {
    flex: 1;
    min-width: 0;
    padding-left: 4px;
    border-bottom: 1px solid #d4d6d9;
}

.titlebar {
    display: flex;
    align-items: center;
    height: 22px;
    padding-left: 4px;
}

.quick {
    display: flex;
    gap: 7px;
}

.quick .with-caret {
    gap: 4px;
    margin-right: -1px;
}

.dim {
    opacity: .6;
}

.lined {
    margin: 2px 2px 0 7px;
}

.title {
    flex: 1;
    min-width: 0;
    margin: 0;
    font-size: 12px;
    font-weight: normal;
    white-space: nowrap;
    overflow: hidden;
}

.window-buttons {
    display: flex;
    gap: 25px;
    padding-right: 14px;
}

.tabs {
    display: flex;
    height: 18px;
}

.tabs a {
    padding: 2px 13px 0;
    color: #333;
    text-decoration: none;
    white-space: nowrap;
}

.tabs a.active {
    background: #5aa5f6;
    color: #fff;
}

.user-tools {
    display: flex;
    align-items: center;
    gap: 7px;
    margin-left: auto;
    padding-right: 2px;
}

.help {
    width: 15px;
    font-size: 15px;
    font-weight: bold;
    color: #8c8c8c;
}

.ask {
    display: flex;
    align-items: center;
    width: 154px;
    height: 17px;
    padding: 0 4px 0 3px;
    border: 1px solid #a6a6a6;
    color: #999;
}

.ask input,
.panel-search input {
    flex: 1;
    min-width: 0;
    padding: 0;
    border: 0;
    outline: 0;
    background: none;
}

input::placeholder {
    color: #808080;
    opacity: 1;
}

/* ribbon */
.ribbon {
    position: relative;
    flex: none;
    display: grid;
    grid-template-columns: 79px 91px 108px 237px 119px 90px 367px;
    padding-top: 3px;
    background: linear-gradient(#fff 40%, #e9ecef);
    border-bottom: 2px solid #96999e;
    overflow-x: clip;
}

.group {
    border-right: 1px solid #c9cbce;
}

.tools {
    display: flex;
    height: 70px;
    padding-left: 8px;
}

.tools .col {
    display: grid;
    grid-template-rows: repeat(3, 23px);
    align-content: start;
}

.group-name {
    display: flex;
    align-items: center;
    justify-content: center;
    gap: 6px;
    height: 23px;
}

.group-name.fixed {
    padding-top: 4px;
}

.tools button:disabled {
    color: #aaa;
}

.big {
    flex-direction: column;
    gap: 5px;
    padding-top: 4px;
}

.pick {
    gap: 4px;
}

.big.active {
    width: 40px;
    background: #c8d9f0;
}

.common .col {
    width: 31px;
}

.modify .col {
    width: 54px;
}

.modify .caret {
    margin-left: 3px;
}

.draw {
    gap: 11px;
    padding-left: 11px;
}

.identify {
    padding-left: 10px;
}

.edit {
    gap: 7px;
    padding-left: 6px;
}

.edit .col .caret {
    margin-left: 3px;
}

.edit .col:nth-child(3) {
    width: 95px;
}

.score {
    position: absolute;
    left: calc(100% - 20px);
    top: 54px;
    width: 48px;
    height: 48px;
    padding: 14px 0 0 3px;
    border: 3px solid #b9bcbf;
    border-radius: 50%;
    background: radial-gradient(circle at 50% 20%, #6fd47c, #2eae46);
    color: #fff;
    font-weight: bold;
    font-size: 11px;
    line-height: 14px;
    z-index: 2;
}

/* combo row */
.context-bar {
    display: flex;
    flex: none;
    gap: 5px;
    padding: 3px 3px 2px;
    background: #c9ccd2;
    border-bottom: 1px solid #8d9096;
}

.context-bar select {
    width: 100px;
    height: 23px;
    padding: 0 3px;
    border: 1px solid #aaa;
    border-radius: 0;
    appearance: none;
    background: #fff url("data:image/svg+xml,%3Csvg xmlns='http://www.w3.org/2000/svg' width='6' height='4'%3E%3Cpath d='M0 0h6L3 4z' fill='%23555'/%3E%3C/svg%3E") no-repeat right 4px center;
}

/* workspace */
.workspace {
    flex: 1;
    min-height: 0;
    display: grid;
    grid-template-columns: 124px 282px 4px 1fr;
    grid-template-rows: minmax(0, 1fr);
    background: #fff;
}

.panels,
.splitter {
    margin-left: 4px;
    margin-right: -4px;
}

.nav {
    display: flex;
    flex-direction: column;
    min-height: 0;
    border: 1px solid #b9bcc1;
    border-top: 0;
}

.nav-head {
    display: flex;
    flex: none;
    align-items: center;
    gap: 4px;
    height: 28px;
    padding: 0 3px 0 5px;
    background: #eee;
    border-bottom: 1px solid #c4c6ca;
}

.nav-head button:first-child {
    margin-right: auto;
}

.boxed {
    justify-content: center;
    width: 25px;
    height: 24px;
    border: 1px solid #5ba4f0;
    border-radius: 3px;
    background: #e6f1fd;
}

.nav-body {
    flex: 1;
    min-height: 0;
    display: flex;
    padding-top: 4px;
    overflow: hidden;
}

.nav-list {
    width: 105px;
    overflow: hidden;
}

.nav-list li {
    display: flex;
    align-items: center;
    gap: 3px;
    height: 24px;
    padding-left: 5px;
    white-space: nowrap;
}

.nav-list .sub {
    gap: 6px;
    margin-left: 20px;
    padding-left: 4px;
}

.nav-list .active {
    background: #c8d9f0;
}

.scroll-v {
    width: 8px;
    border-radius: 4px;
    background: #c8c8c8;
}

.nav-body .scroll-v {
    flex: none;
    height: 404px;
    margin: 11px 0 0 4px;
}

.panels {
    display: flex;
    flex-direction: column;
    gap: 4px;
    min-height: 0;
}

.panel {
    flex: 1 1 0;
    min-height: 0;
    display: flex;
    flex-direction: column;
    border: 1px solid #b9bcc1;
    background: #fff;
}

.panel-strip {
    display: flex;
    flex: none;
    justify-content: flex-end;
    height: 11px;
    padding-right: 4px;
    background: #d3d4d9;
    color: #666;
    font-size: 14px;
    line-height: 11px;
}

.panel-tabs {
    display: flex;
    flex: none;
    height: 22px;
    background: #eee;
    border-bottom: 1px solid #c4c6ca;
}

.panel-tabs button {
    padding: 0 8px;
    color: #808080;
    font-weight: 500;
    background: #e0e0e0;
    border-right: 1px solid #c4c6ca;
}

.panel-tabs .active {
    color: #222;
    font-weight: bold;
    background: #eee;
}

.panel-tools {
    display: flex;
    flex: none;
    align-items: center;
    gap: 16px;
    height: 30px;
    padding-left: 4px;
    background: #eee;
    border-bottom: 1px solid #c4c6ca;
    color: #222;
}

.panel-tools button {
    gap: 3px;
}

.panel-tools .drop {
    margin-right: -5px;
}

.panel-tools .caret {
    margin-left: 4px;
}

.panel-tools .more {
    margin-left: auto;
}

.panel-search {
    display: flex;
    flex: none;
    align-items: center;
    height: 19px;
    padding: 0 3px;
    border-bottom: 1px solid #c4c6ca;
    color: #2b84c4;
}

.tree li {
    display: flex;
    align-items: center;
    gap: 8px;
    height: 21px;
    padding-left: 9px;
}

.chosen {
    margin-left: 31px;
    padding: 2px 4px;
    background: #c8d9f0;
}

.props-body {
    flex: 1;
    min-height: 0;
    display: flex;
    justify-content: space-between;
}

.table-clip {
    width: 266px;
    overflow: hidden;
}

table {
    width: 300px;
    table-layout: fixed;
    border-collapse: collapse;
}

th,
td {
    height: 21px;
    padding: 0 3px;
    border-right: 1px solid #c4c6ca;
    border-bottom: 1px solid #c4c6ca;
    line-height: 18px;
    text-align: left;
    white-space: nowrap;
}

th {
    padding: 0;
    background: #eee;
    color: #444;
    font-weight: normal;
    text-align: center;
}

thead th {
    height: 20px;
}

.num { width: 22px; }
.name { width: 92px; }
.value { width: 140px; }
.blank { background: #fff; }

th.extra {
    padding-left: 6px;
    text-align: left;
}

th.on {
    background: #80bbfa;
    color: #fff;
    font-weight: bold;
}

.link {
    color: #1a5cff;
}

td.editing {
    padding: 0;
}

.editing input {
    display: block;
    width: 100%;
    height: 20px;
    padding: 0 2px;
    border: 2px solid #808080;
    outline: 0;
}

td input[type="checkbox"] {
    display: block;
    appearance: none;
    width: 12px;
    height: 12px;
    margin: 0 0 0 7px;
    border: 1px solid #777;
}

.track-v {
    display: flex;
    flex-direction: column;
    align-items: center;
    width: 14px;
    padding: 2px 3px 3px 0;
}

.track-v .scroll-v {
    height: 178px;
    margin-top: 3px;
}

.up,
.down,
.left,
.right {
    width: 0;
    height: 0;
    border: 4px solid transparent;
}

.up { border-top: 0; border-bottom-color: #222; }
.down { border-bottom: 0; border-top-color: #222; margin-top: auto; }
.left { border-left: 0; border-right-color: #222; }
.right { border-right: 0; border-left-color: #222; margin-left: auto; }

.track-h {
    display: flex;
    flex: none;
    align-items: center;
    height: 14px;
    padding: 0 17px 0 2px;
}

.scroll-h {
    width: 223px;
    height: 8px;
    margin-left: 3px;
    border-radius: 4px;
    background: #c8c8c8;
}

.splitter {
    display: flex;
    align-items: center;
    background: #fff;
}

.splitter button {
    width: 4px;
    height: 100px;
    background: #5f6b78;
}

/* drawing area */
.canvas {
    position: relative;
    min-width: 0;
    margin-left: 4px;
    overflow: hidden;
    background: #000;
}

.drawing {
    display: block;
    width: 100%;
    height: 100%;
    shape-rendering: crispEdges;
}

.lime { stroke: #0f0; fill: none; }
.axis { stroke: #a9a9a9; fill: none; }
.void { stroke: #ccc; fill: none; }
.cyan { stroke: #0ff; fill: none; }
.teal { stroke: #0a9696; fill: none; }
.yellow { stroke: #ff0; fill: none; }
.red { stroke: #f00; fill: none; }
.maroon { stroke: #8b0000; fill: none; }
.bubble { stroke: #008000; fill: none; }
.pointer { fill: #fb3a38; shape-rendering: auto; }
.ucs { shape-rendering: auto; font: 14px "Liberation Sans", sans-serif; }

.rebar-text {
    font: 300 22px Roboto, sans-serif;
    fill: #fff;
}

.axis-text,
.axis-label {
    font: 19px "Liberation Serif", serif;
    fill: #fff;
    color: #fff;
}

.axis-label {
    position: absolute;
    top: 73px;
    right: 0;
}

.tooltip {
    position: absolute;
    left: 358px;
    top: 249px;
    padding: 0 3px;
    border: 1px solid #000;
    background: #ffffe1;
    line-height: 17px;
}

.view-tools {
    position: absolute;
    top: 0;
    right: 0;
    display: flex;
    flex-direction: column;
    align-items: center;
    gap: 6px;
    width: 32px;
    height: 238px;
    padding-top: 12px;
    border-radius: 4px;
    background: rgba(125, 125, 125, .55);
}

.view-tools button {
    position: relative;
    flex-direction: column;
    gap: 5px;
}

.view-tools .caret {
    border-top-color: #222;
}

.three-d span {
    position: absolute;
    left: 5px;
    top: 9px;
    font-size: 10px;
    line-height: 12px;
    color: #222;
}

.ruled {
    border-top: 1px solid #444;
    padding-top: 4px;
}

/* status bar */
.status {
    display: flex;
    flex: none;
    align-items: center;
    gap: 4px;
    height: 31px;
    background: #dddde0;
    border-bottom: 2px solid #111;
    color: #333;
}

.readouts {
    display: grid;
    grid-template-columns: 184px 79px 133px 103px 76px;
    padding-left: 2px;
    white-space: nowrap;
}

.status button {
    justify-content: center;
    min-width: 25px;
    height: 25px;
    padding: 0 3px;
    border: 1px solid #9a9a9c;
    background: #cfcfd1;
}

.status .wide {
    padding: 0 5px;
}

.status .active {
    background: #fff;
    border-color: #3a96f5;
}

.status .off {
    border-color: #b5b5b7;
}

.status .icon + .caret {
    margin-left: 1px;
}

.messages {
    display: flex;
    flex: 1;
    min-width: 0;
}

.hint {
    flex: 0 1 177px;
    overflow: hidden;
    white-space: nowrap;
}

.fps {
    white-space: nowrap;
}

/* desktop taskbar, only its upper edge is in view */
.taskbar {
    display: flex;
    flex: none;
    height: 7px;
    overflow: hidden;
    background: linear-gradient(90deg, #7d8fa8, #a9c2e0 50%, #a9c2e0 74%, #7d90aa 78%, #8497b0);
}

.orb {
    flex: none;
    width: 28px;
    height: 28px;
    margin: 1px 16px;
    border-radius: 50%;
    border: 1px solid #dce8f2;
    background: #42617c;
}

.orb.blue { background: #2e94e8; border: 0; box-shadow: 12px -3px 0 -8px #f5b800; }
.orb.red { background: #d94a3c; border: 0; }
.orb.white { background: #fff; border-color: #4c9ccc; }

.task {
    flex: none;
    width: 60px;
    margin-right: 2px;
    border: 1px solid #33404f;
    border-bottom: 0;
    background: linear-gradient(90deg, #cfdeee, #a9c0da);
}

.task i {
    display: block;
    width: 30px;
    height: 30px;
    margin: 2px auto;
    border-radius: 50%;
}

.task.yellow { background: #f3e98a; }
.task.plain { background: none; border-color: transparent; }
.task.light { background: #c4d6e8; }
.penguin { background: #000; }
.pink { background: #efb8ec; }
.task .sky { background: #62a8f5; border-radius: 6px; }

.peek {
    width: 15px;
    margin-left: auto;
    border: 1px solid #333;
    background: #8d99a8;
}
```
